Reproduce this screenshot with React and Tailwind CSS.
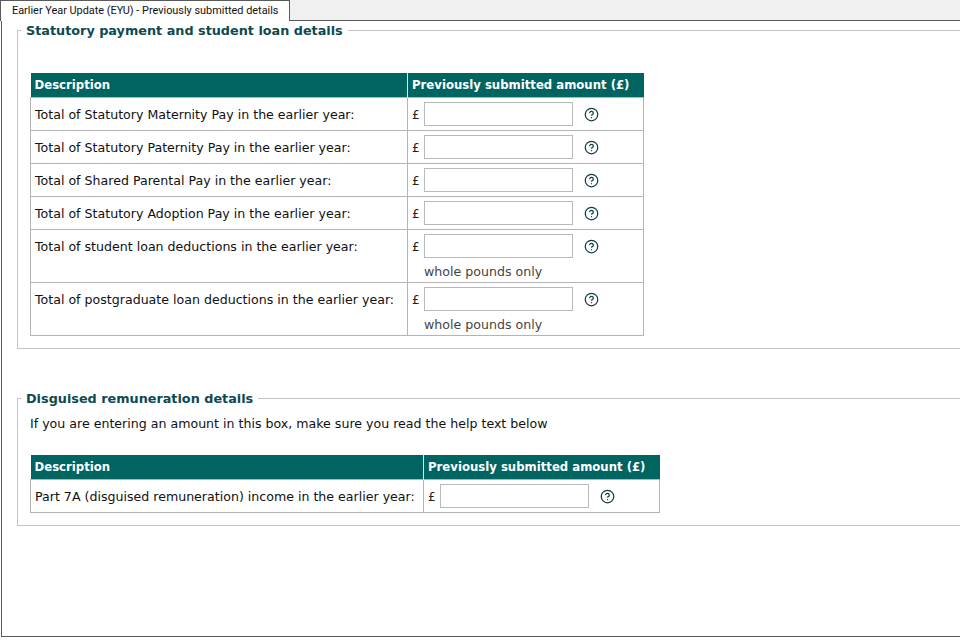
import React from 'react'
import { CircleHelp } from 'lucide-react'

const statutoryRows = [
  { label: 'Total of Statutory Maternity Pay in the earlier year:' },
  { label: 'Total of Statutory Paternity Pay in the earlier year:' },
  { label: 'Total of Shared Parental Pay in the earlier year:' },
  { label: 'Total of Statutory Adoption Pay in the earlier year:' },
  { label: 'Total of student loan deductions in the earlier year:', note: true },
  { label: 'Total of postgraduate loan deductions in the earlier year:', note: true },
]

const AmountCell = ({ note }) => (
  <td className="border border-[#b4b4b4] p-0 pl-[4px] align-top">
    <div className="flex items-center h-[32px]">
      <span className="w-[12px] mt-[2px] text-[12px] text-[#222]">£</span>
      <input className="w-[149px] h-[24px] border border-[#b9b9b9] bg-white" />
      <CircleHelp className="w-[15px] h-[15px] ml-[11px] mt-[1px] text-[#0f3f44]" strokeWidth={2} />
    </div>
    {note && <div className="h-[20px] pl-[12px] leading-[20px] text-[#444]">whole pounds only</div>}
  </td>
)

const DetailsTable = ({ rows, firstCol, secondCol }) => (
  <table className="border-collapse table-fixed" style={{ width: firstCol + secondCol }}>
    <thead>
      <tr className="bg-[#006461] text-white h-[24px] text-[11.7px] whitespace-nowrap">
        <th className="p-0 pt-[2px] pl-[4px] text-left font-bold border-r border-[#cfe8e8]" style={{ width: firstCol }}>Description</th>
        <th className="p-0 pt-[2px] pl-[4px] text-left font-bold" style={{ width: secondCol }}>Previously submitted amount (£)</th>
      </tr>
    </thead>
    <tbody>
      {rows.map((row) => (
        <tr key={row.label}>
          <td className="border border-[#b4b4b4] p-0 pt-[2px] pl-[4px] align-top leading-[30px] text-[#111]">{row.label}</td>
          <AmountCell note={row.note} />
        </tr>
      ))}
    </tbody>
  </table>
)

const Section = ({ title, className, children }) => (
  <fieldset className={`w-[1000px] ml-[15px] border border-[#c4c4c4] pl-[12px] ${className}`}>
    <legend className="-ml-[9px] px-[5px] pt-[2px] font-bold text-[12.8px] leading-[18px] text-[#0d4a4f]">{title}</legend>
    {children}
  </fieldset>
)

export default function App() {
  return (
    <div className="w-[960px] h-[640px] overflow-hidden bg-white text-[12.6px]" style={{ fontFamily: '"DejaVu Sans", sans-serif' }}>
      {/* Tab strip */}
      <div className="flex h-[21px] bg-[#f0f0f0] border-b border-[#5a5a5a]">
        <div className="w-[290px] h-[21px] bg-white border-t border-l border-r border-[#5a5a5a] pl-[11px] text-[10.9px] leading-[20px] text-[#111] whitespace-nowrap" style={{ fontFamily: 'Roboto, sans-serif' }}>
          Earlier Year Update (EYU) - Previously submitted details
        </div>
      </div>

      {/* Panel */}
      <div className="h-[616px] ml-[1px] border-l border-b border-[#5a5a5a] overflow-hidden">
        <Section title="Statutory payment and student loan details" className="-mt-[1px] h-[329px] pt-[33px]">
          <DetailsTable rows={statutoryRows} firstCol={377} secondCol={236} />
        </Section>
        <Section title="Disguised remuneration details" className="mt-[39px] h-[138px]">
          <p className="mt-[8px] mb-[23px] leading-[16px] text-[#111]">If you are entering an amount in this box, make sure you read the help text below</p>
          <DetailsTable rows={[{ label: 'Part 7A (disguised remuneration) income in the earlier year:' }]} firstCol={393} secondCol={236} />
        </Section>
      </div>
    </div>
  )
}
